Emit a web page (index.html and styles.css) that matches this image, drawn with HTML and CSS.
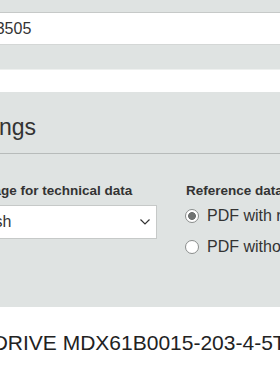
FILE: index.html
```html
<!DOCTYPE html>
<html lang="en">
<head>
<meta charset="utf-8">
<title>Product settings</title>
<link rel="stylesheet" href="styles.css">
</head>
<body>
<div class="page">
  <div class="field-band">
    <div class="field field-filled"><span class="field-text">1283505</span></div>
    <div class="field-gap"></div>
    <div class="field field-empty"></div>
  </div>
  <section class="settings">
    <h2 class="settings-title">Settings</h2>
    <div class="settings-grid">
      <div class="col col-lang">
        <div class="label">Language for technical data</div>
        <div class="select">
          <span class="select-text">English</span>
          <svg class="chevron" width="10" height="6" viewBox="0 0 10 6"><path d="M0.5 0.5 L5 5 L9.5 0.5" fill="none" stroke="#333" stroke-width="1.2"/></svg>
        </div>
      </div>
      <div class="col col-ref">
        <div class="label">Reference data</div>
        <label class="radio-row"><input class="radio" type="radio" name="ref" checked><span>PDF with reference data</span></label>
        <label class="radio-row"><input class="radio" type="radio" name="ref"><span>PDF without reference data</span></label>
      </div>
    </div>
  </section>
  <h1 class="product-title">MOVIDRIVE MDX61B0015-203-4-5T</h1>
</div>
</body>
</html>
```

FILE: styles.css
```css
html, body {
  margin: 0;
  padding: 0;
  background: #ffffff;
  overflow: hidden;
}
body {
  width: 280px;
  height: 380px;
  font-family: "Liberation Sans", Arial, sans-serif;
  color: #333333;
}
.page {
  margin-left: -47px;
  width: 420px;
}
.field-band {
  background: #dfe3e2;
  padding-top: 12px;
}
.field {
  background: #ffffff;
  box-sizing: border-box;
}
.field-filled {
  height: 33px;
  border-top: 1px solid #c6c9c8;
  border-bottom: 1px solid #d4d7d6;
  padding-left: 16px;
  font-size: 16px;
  line-height: 31px;
  color: #333333;
}
.field-gap {
  height: 24px;
}
.field-empty {
  height: 23px;
  border-top: 1px solid #eef0ef;
}
.settings {
  background: #dfe3e2;
  padding: 21px 0 0;
  height: 215px;
  box-sizing: border-box;
}
.settings-title {
  margin: 0;
  font-size: 23px;
  font-weight: normal;
  line-height: 28px;
  padding-bottom: 12px;
  border-bottom: 1px solid #b7bbba;
  color: #333333;
}
.settings-grid {
  display: grid;
  grid-template-columns: 204px 1fr;
  column-gap: 29px;
  padding-top: 28px;
}
.label {
  font-size: 13.5px;
  font-weight: bold;
  line-height: 18px;
  color: #333333;
}
.select {
  margin-top: 5px;
  height: 34px;
  box-sizing: border-box;
  background: #ffffff;
  border: 1px solid #c6c9c8;
  display: flex;
  align-items: center;
  justify-content: space-between;
  padding: 0 6px 0 5px;
  font-size: 16px;
}
.chevron {
  display: block;
}
.radio-row {
  display: flex;
  align-items: center;
  gap: 8px;
  font-size: 16px;
  height: 31px;
  white-space: nowrap;
}
.radio {
  appearance: none;
  -webkit-appearance: none;
  margin: 0 0 0 -1px;
  width: 14px;
  height: 14px;
  border: 1px solid #8a8d8c;
  border-radius: 50%;
  background: #ffffff;
  box-sizing: border-box;
  flex: none;
}
.radio:checked {
  background: radial-gradient(circle, #6f7271 0 3.6px, #ffffff 4.2px);
}
.product-title {
  margin: 0 0 0 -14px;
  padding-top: 24px;
  font-size: 21px;
  font-weight: normal;
  line-height: 24px;
  white-space: nowrap;
  color: #222222;
}
```
